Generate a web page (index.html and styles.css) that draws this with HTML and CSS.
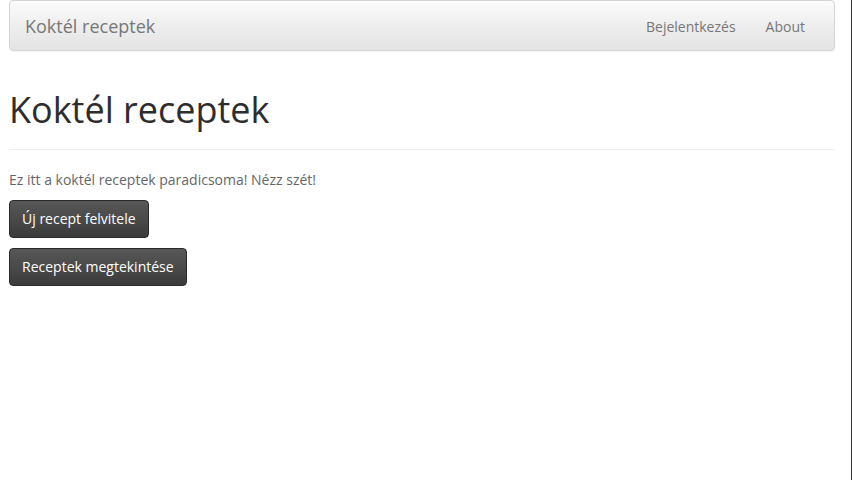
FILE: index.html
```html
<!DOCTYPE html>
<html lang="hu">
<head>
<meta charset="utf-8">
<title>Koktél receptek</title>
<link rel="stylesheet" href="styles.css">
</head>
<body>
<div class="frame">
  <div class="page">
    <nav class="navbar">
      <a class="brand" href="#">Koktél receptek</a>
      <ul class="nav">
        <li><a href="#">Bejelentkezés</a></li>
        <li><a href="#">About</a></li>
      </ul>
    </nav>
    <div class="page-header">
      <h1>Koktél receptek</h1>
    </div>
    <p class="lead-text">Ez itt a koktél receptek paradicsoma! Nézz szét!</p>
    <p class="btn-row"><a class="btn" href="#">Új recept felvitele</a></p>
    <p class="btn-row"><a class="btn" href="#">Receptek megtekintése</a></p>
  </div>
</div>
</body>
</html>
```

FILE: styles.css
```css
html, body {
  margin: 0;
  padding: 0;
  background: #fff;
}
body {
  font-family: "Open Sans", "Liberation Sans", sans-serif;
  font-size: 14px;
  line-height: 20px;
  color: #666;
}
.frame {
  width: 852px;
  height: 480px;
  box-sizing: border-box;
  border-right: 1px solid #3b3744;
}
.page {
  padding: 0 16px 0 9px;
}
.navbar {
  display: flex;
  justify-content: space-between;
  align-items: center;
  height: 51px;
  box-sizing: border-box;
  border: 1px solid #d5d5d5;
  border-radius: 4px;
  background: linear-gradient(to bottom, #fcfcfc 0%, #eeeeee 50%, #e4e4e4 100%);
  box-shadow: 0 1px 1px rgba(0, 0, 0, 0.04);
  padding: 0 14px 0 15px;
}
.brand {
  font-size: 18px;
  line-height: 20px;
  color: #777;
  text-decoration: none;
  padding: 14px 0;
}
.nav {
  display: flex;
  list-style: none;
  margin: 0;
  padding: 2px 0 0 0;
}
.nav a {
  display: block;
  padding: 15px;
  color: #777;
  text-decoration: none;
  line-height: 20px;
}
.page-header {
  margin-top: 39px;
  margin-bottom: 20px;
  padding-bottom: 9px;
  border-bottom: 1px solid #eee;
}
h1 {
  margin: 0 0 10px 0;
  font-size: 36px;
  line-height: 39.6px;
  font-weight: 400;
  color: #2d2d2d;
}
.lead-text {
  margin: 0 0 10px 0;
}
.btn-row {
  margin: 0 0 10px 0;
}
.btn {
  display: inline-block;
  padding: 8px 12px;
  font-size: 14px;
  line-height: 20px;
  color: #fff;
  text-decoration: none;
  border: 1px solid #2a2a2a;
  border-radius: 4px;
  background: linear-gradient(to bottom, #575757 0%, #474747 60%, #3a3a3a 100%);
}
```
